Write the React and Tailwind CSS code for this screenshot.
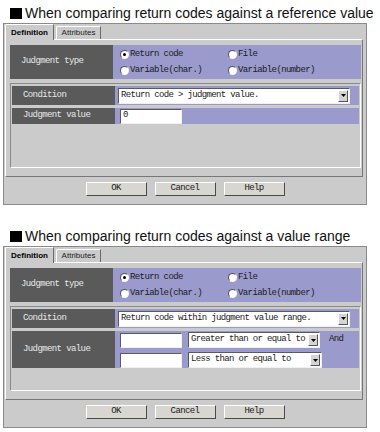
import React from 'react';

const mono = "font-['Liberation_Mono',monospace]";

const Radio = ({ checked, label }) => (
  <div className="flex items-center gap-[1px]">
    <span className="w-[9px] h-[9px] rounded-full bg-white border border-t-[#555] border-l-[#555] border-b-[#f4f4f4] border-r-[#f4f4f4] flex items-center justify-center">
      {checked && <span className="w-[3px] h-[3px] rounded-full bg-black" />}
    </span>
    <span className={`${mono} text-[9px] tracking-[-0.6px] text-[#1a1a1a] leading-none`}>{label}</span>
  </div>
);

const Field = ({ text, className }) => (
  <div
    className={`h-[15px] bg-white border border-t-[#5a5a5a] border-l-[#5a5a5a] border-b-[#f0f0f0] border-r-[#f0f0f0] flex items-center pl-[2px] ${mono} text-[9px] tracking-[-0.6px] text-[#1a1a1a] ${className}`}
  >
    {text}
  </div>
);

const Select = ({ text, className }) => (
  <div
    className={`h-[16px] bg-white border border-t-[#5a5a5a] border-l-[#5a5a5a] border-b-[#f0f0f0] border-r-[#f0f0f0] flex items-center ${className}`}
  >
    <span className={`flex-1 pl-[2px] ${mono} text-[9px] tracking-[-0.65px] text-[#1a1a1a] whitespace-nowrap overflow-hidden`}>
      {text}
    </span>
    <span className="w-[10px] h-[12px] mr-[1px] bg-[#d4d4d4] border border-t-white border-l-white border-b-[#555] border-r-[#555] flex items-center justify-center">
      <svg width="5" height="3" viewBox="0 0 5 3">
        <path d="M0 0h5L2.5 3z" fill="#000" />
      </svg>
    </span>
  </div>
);

const Label = ({ children }) => (
  <div className={`w-[103px] bg-[#5a5a5a] flex items-center pl-[11px] ${mono} text-[9px] tracking-[-0.6px] text-[#e8e8e8]`}>
    {children}
  </div>
);

const Button = ({ children }) => (
  <div className={`w-[61px] h-[14px] bg-[#d8d6d0] border border-t-white border-l-white border-b-[#4a4a4a] border-r-[#4a4a4a] flex items-center justify-center ${mono} text-[9px] tracking-[-0.6px] text-[#1a1a1a]`}>
    {children}
  </div>
);

const Dialog = ({ title, condition, range }) => (
  <div className="flex flex-col">
    <div className="h-[23px] flex items-end pl-[10px] pb-[2px] gap-[3px]">
      <span className="w-[12px] h-[11px] bg-black mb-[2px]" />
      <span className="text-[14px] leading-none text-[#111] pb-[1px] whitespace-nowrap">{title}</span>
    </div>

    <div className="ml-[3px] w-[364px] h-[182px] bg-[#cbcbcb] border border-[#8a8a8a] flex flex-col">
      <div className="h-[15px] flex items-end pl-[1px] gap-[2px]">
        <div className="relative z-10 -mb-px w-[49px] h-[16px] bg-[#cbcbcb] border-t border-l border-t-white border-l-white border-r border-r-[#6a6a6a] rounded-tl-[2px] flex items-center justify-center text-[8px] font-bold text-black">
          Definition
        </div>
        <div className="w-[45px] h-[13px] bg-[#cbcbcb] border-t border-l border-t-white border-l-white border-r border-r-[#6a6a6a] rounded-tl-[2px] flex items-center justify-center text-[8px] text-[#222]">
          Attributes
        </div>
      </div>

      <div className="ml-[1px] w-[358px] h-[138px] border border-t-white border-l-white border-b-[#777] border-r-[#777] pt-[5px] pl-[4px]">
        <div className="w-[351px] h-[34px] flex">
          <Label>Judgment type</Label>
          <div className="flex-1 bg-[#9a9acc] grid grid-cols-[108px_1fr] grid-rows-2 py-[1px] pl-[7px] items-center">
            <Radio checked label="Return code" />
            <Radio label="File" />
            <Radio label="Variable(char.)" />
            <Radio label="Variable(number)" />
          </div>
        </div>

        <div className="mt-[4px] w-[351px] h-[85px] border border-t-[#8a8a8a] border-l-[#8a8a8a] border-b-white border-r-white px-[1px] pt-[2px] flex flex-col gap-[3px]">
          <div className="h-[19px] flex">
            <Label>Condition</Label>
            <div className="w-[244px] bg-[#9a9acc] flex items-center pl-[3px]">
              <Select text={condition} className="w-[232px]" />
            </div>
          </div>

          {range ? (
            <div className="h-[37px] flex">
              <Label>Judgment value</Label>
              <div className="w-[244px] bg-[#9a9acc] flex pl-[5px] pt-[1px]">
                <div className="flex flex-col gap-[4px]">
                  <div className="flex items-center gap-[6px]">
                    <Field text="" className="w-[62px]" />
                    <Select text="Greater than or equal to" className="w-[132px]" />
                    <span className={`${mono} text-[9px] tracking-[-0.6px] text-[#1a1a1a] ml-[3px]`}>And</span>
                  </div>
                  <div className="flex items-center gap-[6px]">
                    <Field text="" className="w-[62px]" />
                    <Select text="Less than or equal to" className="w-[134px]" />
                  </div>
                </div>
              </div>
            </div>
          ) : (
            <div className="h-[16px] flex">
              <Label>Judgment value</Label>
              <div className="w-[244px] bg-[#9a9acc] flex items-center pl-[5px]">
                <Field text="0" className="w-[62px]" />
              </div>
            </div>
          )}
        </div>
      </div>

      <div className="flex justify-center gap-[8px] pt-[5px]">
        <Button>OK</Button>
        <Button>Cancel</Button>
        <Button>Help</Button>
      </div>
    </div>
  </div>
);

const App = () => (
  <div className="w-[380px] h-[432px] bg-white font-['Liberation_Sans',Arial,sans-serif] flex flex-col">
    <Dialog
      title="When comparing return codes against a reference value"
      condition="Return code > judgment value."
    />
    <div className="h-[18px]" />
    <Dialog
      title="When comparing return codes against a value range"
      condition="Return code within judgment value range."
      range
    />
  </div>
);

export default App;
